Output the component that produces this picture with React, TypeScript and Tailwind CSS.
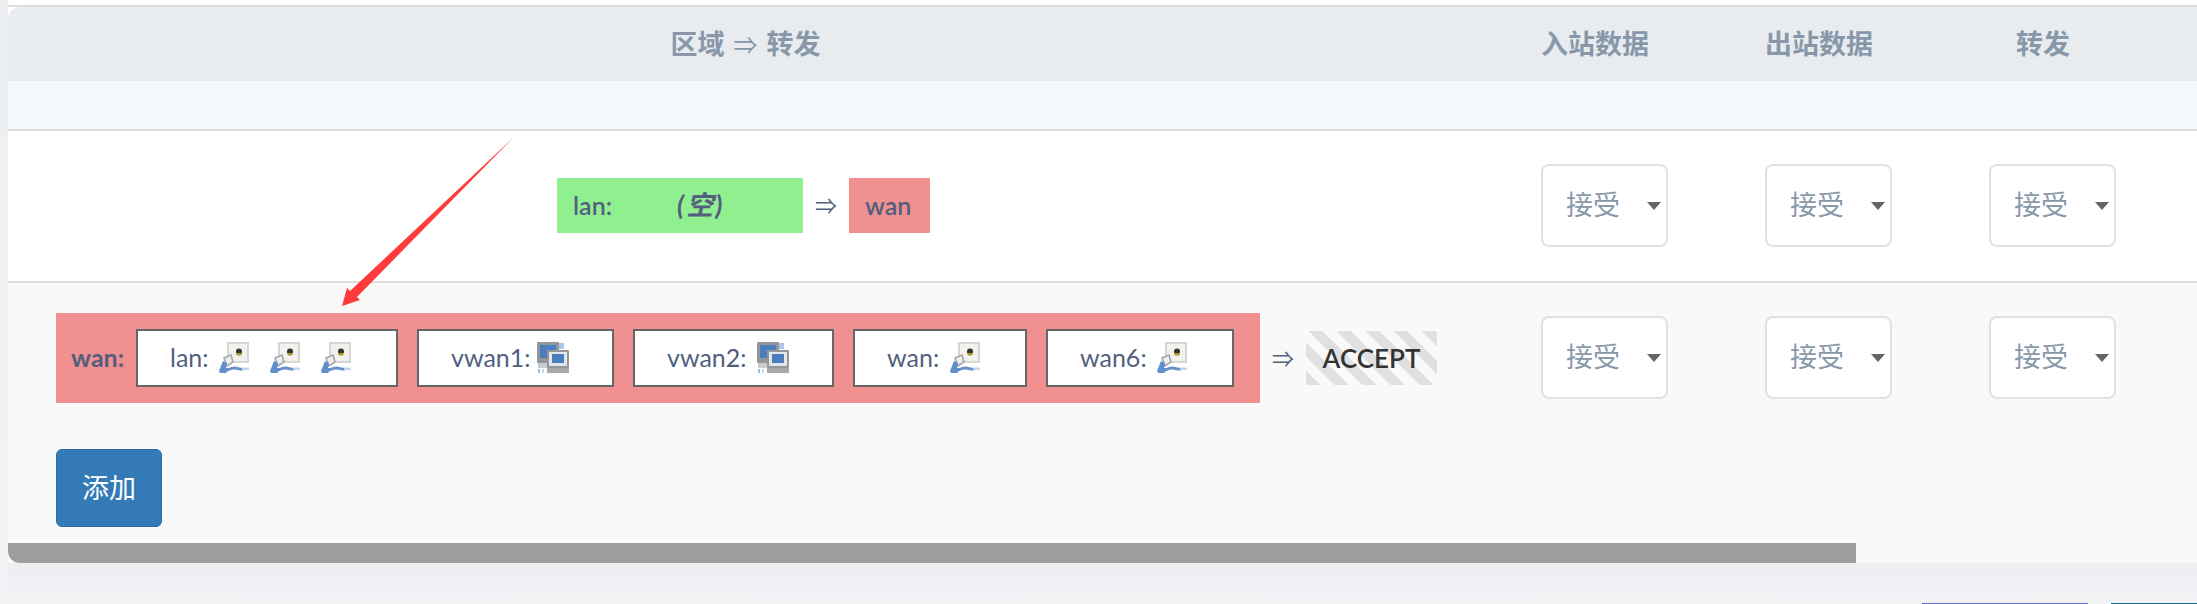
import React from 'react';

const cjk = "font-['Lato','Noto_Sans_CJK_SC',sans-serif]";

function PortIcon() {
    return (
        <svg width="30" height="32" viewBox="0 0 30 32" className="shrink-0 blur-[0.6px]">
            <rect x="8" y="0" width="22" height="21" fill="#d6d7d4" />
            <rect x="10" y="2" width="18" height="17" fill="#f1f1ed" />
            <circle cx="20" cy="9.5" r="3" fill="#33332f" />
            <path d="M17 11h6l-1 2.5h-4z" fill="#a8982e" />
            <path d="M5 16l7-3 2 7-6 4z" fill="#eceded" stroke="#a4a8ae" strokeWidth="1.6" />
            <path d="M4 19l4 2-1 5 4 0-4 5H1l-1-2z" fill="#5f8fca" />
            <path d="M2 29c6 1 8-3 13-3s6 2 9 1" fill="none" stroke="#6592cc" strokeWidth="2.8" />
            <path d="M23 27c3 0 4-1 7 0" fill="none" stroke="#c0d3ea" strokeWidth="2.4" />
        </svg>
    );
}

function NetIcon() {
    return (
        <svg width="32" height="32" viewBox="0 0 32 32" className="shrink-0 blur-[0.5px]">
            <path d="M22 1h5v6h-5z" fill="#a9c7e6" />
            <rect x="0" y="0" width="22" height="21" rx="1" fill="#94979a" />
            <rect x="3" y="3" width="16" height="13" fill="#4a7ebf" />
            <rect x="1" y="21" width="11" height="5" fill="#c9cbcd" />
            <rect x="1" y="27" width="2" height="4" fill="#9fc0e4" />
            <rect x="5" y="27" width="2" height="4" fill="#c6d9ee" />
            <rect x="10" y="8" width="22" height="18" rx="1" fill="#94979a" />
            <rect x="12" y="10" width="18" height="14" fill="#e4e7ea" />
            <rect x="15" y="12" width="12" height="9" fill="#4a7ebf" />
            <rect x="10" y="26" width="22" height="5" fill="#a8aaaa" />
        </svg>
    );
}

function Zone({ name, w, gap, ports }: { name: string; w: string; gap: string; ports: React.ReactNode }) {
    return (
        <div className={`flex items-center h-[58px] bg-white border-2 border-[#666] pl-[32px] shrink-0 ${w}`}>
            <span className={`text-[25px] whitespace-nowrap ${gap}`}>{name}:</span>
            {ports}
        </div>
    );
}

function Policy() {
    return (
        <div className="flex items-center justify-between w-[127px] h-[83px] bg-white border-2 border-[#dee2e6] rounded-[8px] pl-[23px] pr-[5px] text-[27px] text-[#8898aa] shrink-0">
            <span>接受</span>
            <svg width="14" height="8" viewBox="0 0 14 8"><path d="M0 0h14L7 8z" fill="#666" /></svg>
        </div>
    );
}

function RowPolicies() {
    return (
        <>
            {[0, 1, 2].map((i) => (
                <div key={i} className="w-[224px] pl-[58px] pt-[33px] flex items-start shrink-0">
                    <Policy />
                </div>
            ))}
        </>
    );
}

export default function App() {
    return (
        <div className={`relative w-[2197px] h-[604px] overflow-hidden flex bg-gradient-to-b from-[#eceef2] to-[#f2f3f5] text-[#525f7f] ${cjk}`}>
            <div className="w-[8px] shrink-0" />
            <div className="flex-1 flex flex-col min-w-0">
                <div className="h-[5px] bg-white shrink-0" />
                <div className="bg-white border-t-2 border-[#ddd] shrink-0">
                    <div className="flex items-center h-[74px] bg-[#e9ecef] rounded-tl-[12px] text-[#8898aa] font-bold text-[27px]">
                        <div className="w-[1475px] text-center shrink-0 whitespace-nowrap">
                            区域<span className="font-normal text-[24px] mx-[9px]">⇒</span>转发
                        </div>
                        <div className="w-[224px] text-center shrink-0">入站数据</div>
                        <div className="w-[224px] text-center shrink-0">出站数据</div>
                        <div className="w-[224px] text-center shrink-0">转发</div>
                    </div>
                </div>
                <div className="h-[50px] bg-[#f6f9fc] border-b-2 border-[#ddd] shrink-0" />

                <div className="flex h-[152px] bg-white border-b-2 border-[#ddd] shrink-0">
                    <div className="w-[1475px] shrink-0 flex items-center justify-center pr-[4px] pb-[1px]">
                        <div className="flex items-center h-[55px] w-[246px] bg-[#90f090] pl-[16px] text-[25px] font-semibold">
                            <span className="w-[104px]">lan:</span>
                            <em className="font-bold text-[27px] tracking-[2px]">(空)</em>
                        </div>
                        <span className="w-[46px] text-center text-[22px]">⇒</span>
                        <div className="flex items-center h-[55px] w-[81px] bg-[#f09090] pl-[16px] text-[25px] font-semibold">wan</div>
                    </div>
                    <RowPolicies />
                </div>

                <div className="flex-1 flex flex-col bg-[#f9f9f9] min-h-0">
                    <div className="flex h-[150px] shrink-0">
                        <div className="w-[1475px] shrink-0 flex items-center justify-center pl-[2px]">
                            <div className="flex items-center h-[90px] w-[1204px] bg-[#f09090] pl-[15px] shrink-0">
                                <span className="text-[25px] font-bold w-[65px] shrink-0">wan:</span>
                                <div className="flex gap-[19px]">
                                    <Zone name="lan" w="w-[262px]" gap="mr-[10px]" ports={<div className="flex gap-[21px]"><PortIcon /><PortIcon /><PortIcon /></div>} />
                                    <Zone name="vwan1" w="w-[197px]" gap="mr-[6px]" ports={<NetIcon />} />
                                    <Zone name="vwan2" w="w-[201px]" gap="mr-[10px]" ports={<NetIcon />} />
                                    <Zone name="wan" w="w-[174px]" gap="mr-[11px]" ports={<PortIcon />} />
                                    <Zone name="wan6" w="w-[188px]" gap="mr-[10px]" ports={<PortIcon />} />
                                </div>
                            </div>
                            <span className="w-[46px] text-center text-[22px] shrink-0">⇒</span>
                            <div className="flex items-center justify-center w-[131px] h-[54px] shrink-0 text-[26px] font-semibold text-[#333] bg-[repeating-linear-gradient(45deg,#e0e0e0_0,#e0e0e0_10px,#f9f9f9_10px,#f9f9f9_20px)]">
                                ACCEPT
                            </div>
                        </div>
                        <RowPolicies />
                    </div>
                    <div className="flex-1 pl-[48px] pt-[16px]">
                        <button className="w-[106px] h-[78px] rounded-[6px] bg-[#337ab7] border border-[#2e6da4] text-white text-[27px]">添加</button>
                    </div>
                    <div className="w-[1848px] h-[20px] bg-[#9e9e9e] rounded-bl-[12px] shrink-0" />
                </div>

                <div className="h-[41px] shrink-0 bg-gradient-to-b from-[#eceef2] to-[#f2f3f5] flex pl-[1914px] gap-[23px] pt-[40px]">
                    <div className="w-[166px] h-[1px] shrink-0 bg-[#6672c4]" />
                    <div className="w-[86px] h-[1px] shrink-0 bg-[#1a6b8a]" />
                </div>
            </div>

            <svg className="absolute inset-0 pointer-events-none" width="2197" height="604" viewBox="0 0 2197 604">
                <polygon points="514,137 357,297 360,300 342,306 347,288 350,291" fill="#ff3b3b" />
            </svg>
        </div>
    );
}
